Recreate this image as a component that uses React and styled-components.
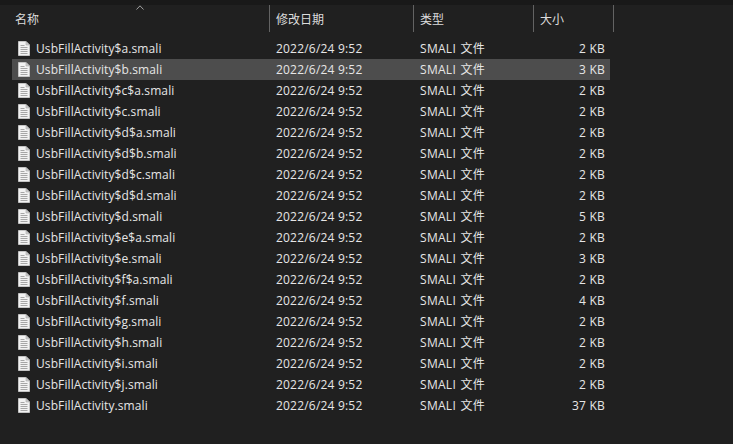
import React from 'react';
import styled, { createGlobalStyle } from 'styled-components';

const files = [
    ['UsbFillActivity$a.smali', '2 KB'],
    ['UsbFillActivity$b.smali', '3 KB', true],
    ['UsbFillActivity$c$a.smali', '2 KB'],
    ['UsbFillActivity$c.smali', '2 KB'],
    ['UsbFillActivity$d$a.smali', '2 KB'],
    ['UsbFillActivity$d$b.smali', '2 KB'],
    ['UsbFillActivity$d$c.smali', '2 KB'],
    ['UsbFillActivity$d$d.smali', '2 KB'],
    ['UsbFillActivity$d.smali', '5 KB'],
    ['UsbFillActivity$e$a.smali', '2 KB'],
    ['UsbFillActivity$e.smali', '3 KB'],
    ['UsbFillActivity$f$a.smali', '2 KB'],
    ['UsbFillActivity$f.smali', '4 KB'],
    ['UsbFillActivity$g.smali', '2 KB'],
    ['UsbFillActivity$h.smali', '2 KB'],
    ['UsbFillActivity$i.smali', '2 KB'],
    ['UsbFillActivity$j.smali', '2 KB'],
    ['UsbFillActivity.smali', '37 KB'],
];

function FileIcon() {
    return (
        <svg width="12" height="15" viewBox="0 0 12 15">
            <path d="M0.5 0.5H8L11.5 4V14.5H0.5Z" fill="#f2f2f2" stroke="#c4c4c4" />
            <path d="M8 0.5V4H11.5Z" fill="#cfcfcf" stroke="#a8a8a8" strokeWidth="0.6" />
            <path d="M2.5 4.5H6.5M2.5 6.5H9.5M2.5 8.5H9.5M2.5 10.5H9.5M2.5 12.5H9.5" stroke="#a6a6a6" strokeWidth="1" />
        </svg>
    );
}

function App() {
    return (
        <>
            <GlobalStyle />
            <Window>
                <TopStrip />
                <Header>
                    <SortArrow width="8" height="5" viewBox="0 0 8 5">
                        <path d="M0.5 4.5L4 0.8L7.5 4.5" fill="none" stroke="#a0a0a0" />
                    </SortArrow>
                    <HeaderCell $width={270}>名称</HeaderCell>
                    <HeaderCell $width={144}>修改日期</HeaderCell>
                    <HeaderCell $width={120}>类型</HeaderCell>
                    <HeaderCell $width={80}>大小</HeaderCell>
                </Header>
                <List>
                    {files.map(([name, size, selected]) => (
                        <Row key={name} $selected={selected}>
                            <NameCell>
                                <FileIcon />
                                <span>{name}</span>
                            </NameCell>
                            <DateCell>2022/6/24 9:52</DateCell>
                            <TypeCell>SMALI 文件</TypeCell>
                            <SizeCell>{size}</SizeCell>
                        </Row>
                    ))}
                </List>
            </Window>
        </>
    );
}

const GlobalStyle = createGlobalStyle`
    html, body {
        margin: 0;
        padding: 0;
        background: #202020;
    }
`;

const Window = styled.div`
    width: 733px;
    height: 444px;
    overflow: hidden;
    background: #202020;
    color: #e6e6e6;
    font-family: 'Open Sans', 'Noto Sans CJK SC', sans-serif;
    font-size: 12px;
`;

const TopStrip = styled.div`
    height: 5px;
    background: #191919;
`;

const Header = styled.div`
    position: relative;
    display: flex;
    height: 27px;
`;

const SortArrow = styled.svg`
    position: absolute;
    left: 136px;
    top: 0;
`;

const HeaderCell = styled.div`
    box-sizing: border-box;
    width: ${({ $width }) => $width}px;
    padding: 5px 0 0 ${({ $width }) => ($width === 270 ? 15 : 6)}px;
    border-right: 1px solid #636363;
    line-height: 20px;
    color: #dcdcdc;
`;

const List = styled.div`
    display: flex;
    flex-direction: column;
    width: 598px;
    margin: 6px 0 0 12px;
`;

const Row = styled.div`
    display: flex;
    align-items: center;
    height: 21px;
    line-height: 21px;
    background: ${({ $selected }) => ($selected ? '#4d4d4d' : 'transparent')};
`;

const NameCell = styled.div`
    display: flex;
    align-items: center;
    gap: 6px;
    width: 264px;
    padding-left: 6px;
    box-sizing: border-box;
    letter-spacing: 0.1px;
`;

const DateCell = styled.div`
    width: 144px;
    letter-spacing: 0.2px;
`;

const TypeCell = styled.div`
    width: 120px;
    letter-spacing: 0.3px;
    word-spacing: 1px;
`;

const SizeCell = styled.div`
    width: 65px;
    text-align: right;
    letter-spacing: 0.2px;
`;

export default App;
